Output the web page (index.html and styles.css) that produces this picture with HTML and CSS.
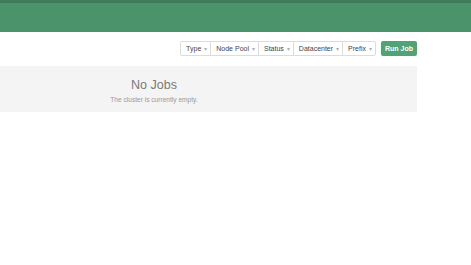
FILE: index.html
```html
<!DOCTYPE html>
<html>
<head>
<meta charset="utf-8">
<link rel="stylesheet" href="styles.css">
</head>
<body>
<header class="topbar"><div class="stripe"></div></header>
<main class="page">
  <div class="toolbar">
    <div class="filters">
      <button class="filter">Type<span class="caret">▾</span></button>
      <button class="filter">Node Pool<span class="caret">▾</span></button>
      <button class="filter">Status<span class="caret">▾</span></button>
      <button class="filter">Datacenter<span class="caret">▾</span></button>
      <button class="filter">Prefix<span class="caret">▾</span></button>
    </div>
    <button class="run">Run Job</button>
  </div>
  <section class="empty">
    <div class="empty-inner">
      <h2 class="empty-title">No Jobs</h2>
      <p class="empty-text">The cluster is currently empty.</p>
    </div>
  </section>
</main>
</body>
</html>
```
FILE: styles.css
```css
html, body { margin: 0; padding: 0; background: #fff; }
body { font-family: "Liberation Sans", Arial, sans-serif; }
.topbar { height: 32px; background: #4a936b; }
.stripe { height: 3px; background: #3f7c5b; }
.page { width: 417px; }
.toolbar { display: flex; justify-content: flex-end; align-items: center; gap: 5px; padding: 9px 0 10px; }
.filters { display: flex; }
.filter {
  font-family: inherit; font-size: 7px; color: #444; background: #fff;
  border: 1px solid #dcdcdc; margin-left: -1px; height: 15px; padding: 0 3px 0 5px;
  display: flex; align-items: center; gap: 3px;
}
.filter:first-child { margin-left: 0; border-radius: 2px 0 0 2px; }
.filter:last-child { border-radius: 0 2px 2px 0; }
.caret { color: #b0b0b0; font-size: 6px; width: 3px; }
.run {
  font-family: inherit; font-size: 7px; font-weight: bold; color: #fff; background: #4fa374;
  border: none; border-radius: 2px; height: 15px; padding: 0 4px;
}
.empty { background: #f4f4f4; height: 46px; display: flex; }
.empty-inner { width: 308px; text-align: center; padding-top: 11px; }
.empty-title { margin: 0; font-size: 12.5px; font-weight: normal; color: #7a7a7a; line-height: 16px; }
.empty-text { margin: 3px 0 0; font-size: 6.6px; color: #999; }
```
